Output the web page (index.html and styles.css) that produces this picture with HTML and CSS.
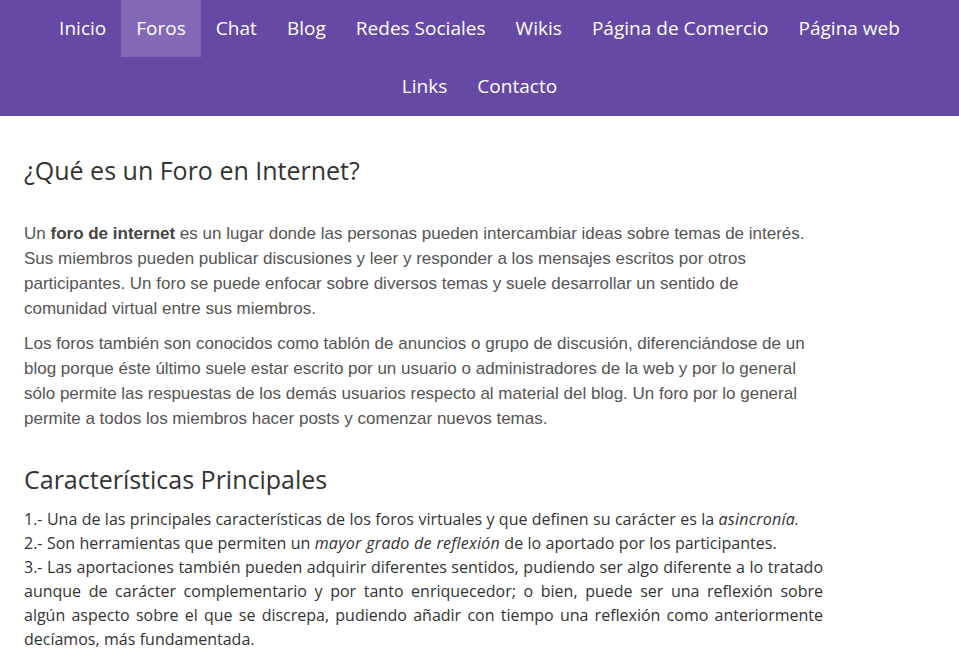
FILE: index.html
```html
<!DOCTYPE html>
<html lang="es">
<head>
<meta charset="utf-8">
<title>Foros</title>
<link rel="stylesheet" href="styles.css">
</head>
<body>
<nav class="topnav">
  <a href="#" class="nav-link">Inicio</a>
  <a href="#" class="nav-link active">Foros</a>
  <a href="#" class="nav-link">Chat</a>
  <a href="#" class="nav-link">Blog</a>
  <a href="#" class="nav-link">Redes Sociales</a>
  <a href="#" class="nav-link">Wikis</a>
  <a href="#" class="nav-link">Página de Comercio</a>
  <a href="#" class="nav-link">Página web</a>
  <a href="#" class="nav-link">Links</a>
  <a href="#" class="nav-link">Contacto</a>
</nav>
<main class="content">
  <h1 class="title">¿Qué es un Foro en Internet?</h1>
  <p class="para">Un <strong>foro de internet</strong> es un lugar donde las personas pueden intercambiar ideas sobre temas de interés. Sus miembros pueden publicar discusiones y leer y responder a los mensajes escritos por otros participantes. Un foro se puede enfocar sobre diversos temas y suele desarrollar un sentido de comunidad virtual entre sus miembros.</p>
  <p class="para">Los foros también son conocidos como tablón de anuncios o grupo de discusión, diferenciándose de un blog porque éste último suele estar escrito por un usuario o administradores de la web y por lo general sólo permite las respuestas de los demás usuarios respecto al material del blog. Un foro por lo general permite a todos los miembros hacer posts y comenzar nuevos temas.</p>
  <h2 class="subtitle">Características Principales</h2>
  <div class="features">
    <p class="feat">1.- Una de las principales características de los foros virtuales y que definen su carácter es la <em>asincronía.</em></p>
    <p class="feat">2.- Son herramientas que permiten un <em>mayor grado de reflexión</em> de lo aportado por los participantes.</p>
    <p class="feat">3.- Las aportaciones también pueden adquirir diferentes sentidos, pudiendo ser algo diferente a lo tratado aunque de carácter complementario y por tanto enriquecedor; o bien, puede ser una reflexión sobre algún aspecto sobre el que se discrepa, pudiendo añadir con tiempo una reflexión como anteriormente decíamos, más fundamentada.</p>
  </div>
</main>
</body>
</html>
```
FILE: styles.css
```css
html, body {
  margin: 0;
  padding: 0;
  background: #ffffff;
}
body {
  font-family: "Open Sans", "Liberation Sans", sans-serif;
}
.topnav {
  background: #6549a5;
  display: flex;
  flex-wrap: wrap;
  justify-content: center;
  padding: 0 40px;
}
.nav-link {
  display: block;
  color: #ffffff;
  text-decoration: none;
  font-size: 19px;
  line-height: 57px;
  height: 57px;
  padding: 0 15px;
  margin-bottom: 1px;
  letter-spacing: 0.02px;
}
.nav-link.active {
  background: #8468b8;
}
.content {
  width: 800px;
  padding: 0 24px;
}
.title {
  font-weight: 400;
  font-size: 25px;
  color: #333333;
  margin: 38px 0 35px;
  line-height: 32px;
}
.para {
  font-family: "Liberation Sans", Arial, sans-serif;
  font-size: 17px;
  line-height: 25px;
  color: #555555;
  margin: 0 0 10px;
}
.para strong {
  color: #444444;
}
.subtitle {
  font-weight: 400;
  font-size: 25px;
  color: #333333;
  margin: 32px 0 12px;
  line-height: 32px;
}
.features {
  width: 799px;
}
.feat {
  font-size: 16px;
  line-height: 24px;
  color: #333333;
  margin: 0;
  text-align: justify;
  word-spacing: 0.25px;
}
.feat em {
  letter-spacing: 0.25px;
}
```
